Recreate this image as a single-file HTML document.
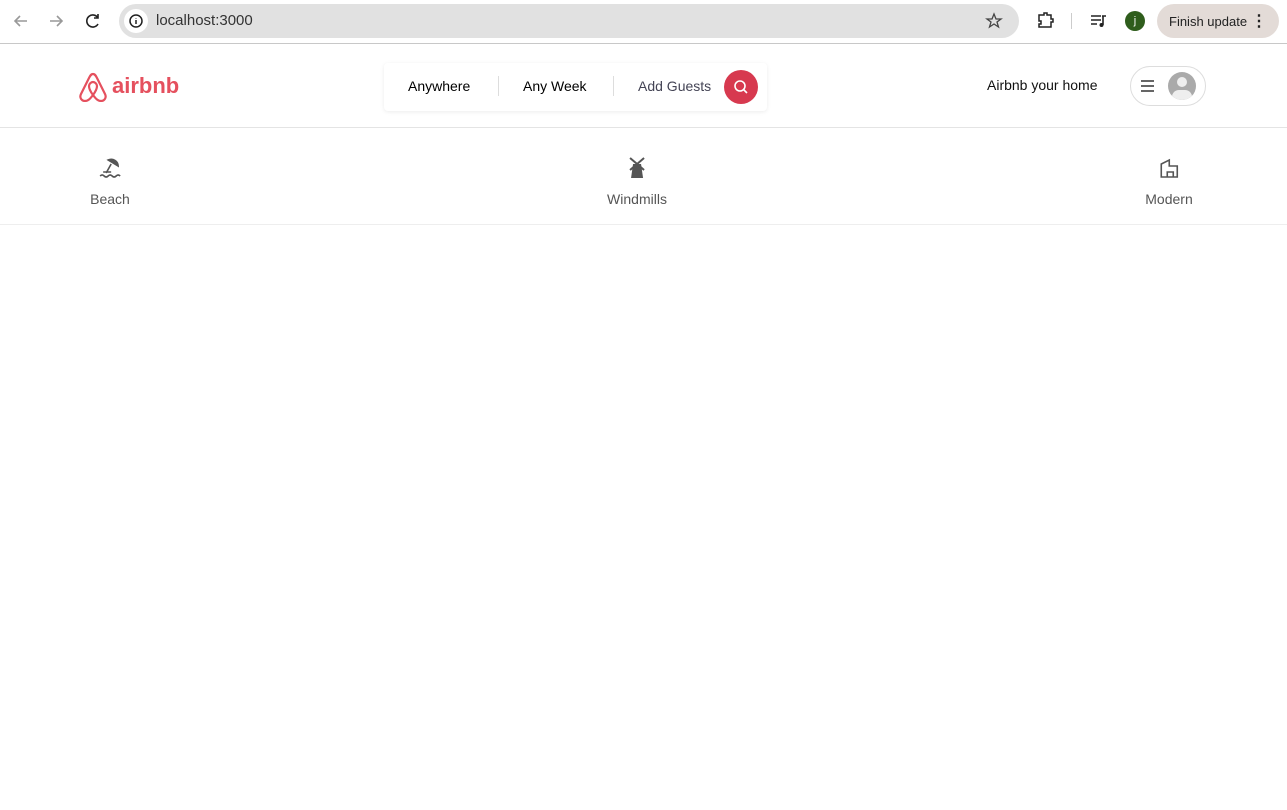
<!DOCTYPE html>
<html><head><style>
*{margin:0;padding:0;box-sizing:border-box}
body{width:1287px;height:810px;background:#fff;font-family:"Liberation Sans",sans-serif;position:relative;overflow:hidden}
.chrome{position:absolute;left:0;top:0;width:1287px;height:44px;background:#fff;border-bottom:1px solid #c8c8c8}
.url{position:absolute;left:119px;top:4px;width:900px;height:34px;border-radius:17px;background:#e1e1e1}
.url .i{position:absolute;left:5px;top:5px;width:24px;height:24px;border-radius:12px;background:#fff}
.url span{position:absolute;left:37px;top:8px;font-size:15px;color:#333}
.fin{position:absolute;left:1157px;top:4px;width:122px;height:34px;border-radius:17px;background:#e3dbd7;font-size:13px;color:#222;padding:10px 0 0 12px}
.avatar{position:absolute;left:1125px;top:11px;width:20px;height:20px;border-radius:10px;background:#2f5d1c;color:#fff;font-size:11px;text-align:center;line-height:20px}
.hdr{position:absolute;top:45px;left:0;width:1287px;height:83px;border-bottom:1px solid #e4e4e4}
.logo{position:absolute;left:78px;top:25px;color:#e5505e;font-size:22px;font-weight:bold;display:flex;align-items:center;gap:4px}
.search{position:absolute;left:384px;top:18px;width:383px;height:48px;box-shadow:0 1px 4px rgba(0,0,0,.08);border-radius:4px;font-size:14px}
.search span{position:absolute;top:15px}
.sep{position:absolute;top:13px;width:1px;height:20px;background:#ddd}
.sbtn{position:absolute;left:340px;top:7px;width:34px;height:34px;border-radius:17px;background:#d7394f}
.host{position:absolute;left:987px;top:32px;font-size:14px;color:#111}
.menu{position:absolute;left:1130px;top:21px;width:76px;height:40px;border:1px solid #ddd;border-radius:20px}
.cat{position:absolute;top:128px;height:97px;border-bottom:1px solid #eee;width:1287px}
.c{position:absolute;top:28px;text-align:center;font-size:14px;color:#555;transform:translateX(-50%)}
.c svg{display:block;margin:0 auto 11px}
</style></head><body>
<div class="chrome">
<svg style="position:absolute;left:12px;top:12px" width="90" height="18" fill="none" stroke-width="1.6"><path d="M15 9H3M8 4L3 9l5 5" stroke="#999"/><path d="M38 9h12M45 4l5 5-5 5" stroke="#999"/><path d="M86 6a6 6 0 1 0 0 6M86 2v4h-4" stroke="#222"/></svg>
<div class="url"><div class="i"><svg width="24" height="24"><circle cx="12" cy="12" r="6" fill="none" stroke="#222" stroke-width="1.5"/><path d="M12 11v4M12 9v.5" stroke="#222" stroke-width="1.5"/></svg></div><span>localhost:3000</span>
<svg style="position:absolute;left:866px;top:8px" width="18" height="18"><path d="M9 2l2 5h5l-4 3 1.5 5L9 12l-4.5 3L6 10 2 7h5z" fill="none" stroke="#444" stroke-width="1.3"/></svg></div>
<svg style="position:absolute;left:1036px;top:11px" width="20" height="20"><path d="M3 4h5v-2h3v2h4v4h2v3h-2v5H3v-3h2v-3H3z" fill="none" stroke="#222" stroke-width="1.5"/></svg>
<div style="position:absolute;left:1071px;top:13px;width:1px;height:16px;background:#ccc"></div>
<svg style="position:absolute;left:1090px;top:12px" width="18" height="18"><path d="M1 4h10M1 8h10M1 12h6M12 4h4M13 4v9" stroke="#222" stroke-width="1.6"/><circle cx="11.5" cy="13" r="2" fill="#222"/></svg>
<div class="avatar">j</div>
<div class="fin">Finish update <b style="position:absolute;right:12px;top:7px;font-size:16px">⋮</b></div>
</div>
<div class="hdr">
<div class="logo"><svg width="30" height="32" viewBox="0 0 30 32" fill="none" stroke="#e5505e" stroke-width="2.2"><path d="M15 4c-2 0-3 2-4 4L3 24c-2 4 1 7 4 7 3 0 5-2 8-6 3 4 5 6 8 6 3 0 6-3 4-7L19 8c-1-2-2-4-4-4z"/><path d="M15 25c-3-4-4-7-4-9 0-2 2-4 4-4s4 2 4 4c0 2-1 5-4 9z"/></svg>airbnb</div>
<div class="search"><span style="left:24px">Anywhere</span><div class="sep" style="left:114px"></div><span style="left:139px">Any Week</span><div class="sep" style="left:229px"></div><span style="left:254px;color:#445">Add Guests</span>
<div class="sbtn"><svg width="34" height="34"><circle cx="16" cy="16" r="5" fill="none" stroke="#fff" stroke-width="1.6"/><path d="M20 20l3 3" stroke="#fff" stroke-width="1.6"/></svg></div></div>
<div class="host">Airbnb your home</div>
<div class="menu"><svg style="position:absolute;left:10px;top:13px" width="14" height="12"><path d="M0 1h13M0 6h13M0 11h13" stroke="#333" stroke-width="1.5"/></svg><div style="position:absolute;left:37px;top:5px;width:28px;height:28px;border-radius:14px;background:#aaa;overflow:hidden"><div style="position:absolute;left:9px;top:5px;width:10px;height:10px;border-radius:5px;background:#eee"></div><div style="position:absolute;left:4px;top:18px;width:20px;height:14px;border-radius:10px;background:#eee"></div></div></div>
</div>
<div class="cat">
<div class="c" style="left:110px"><svg width="24" height="24" fill="none" stroke="#555" stroke-width="1.6"><path d="M10 4a7 7 0 0 1 10 6L10 4z" fill="#555"/><path d="M13 8l-5 9M5 16h8M2 20q2-2 4 0t4 0 4 0 4 0 4 0"/></svg>Beach</div>
<div class="c" style="left:637px"><svg width="24" height="24" fill="#555"><path d="M8 8h8l2 14H6z"/><path d="M5 2l14 12M19 2L5 14" stroke="#555" stroke-width="2"/></svg>Windmills</div>
<div class="c" style="left:1169px"><svg width="24" height="24" fill="none" stroke="#555" stroke-width="1.6"><path d="M4 21V8l8-4v6h8v11zM10 21v-5h6v5"/></svg>Modern</div>
</div>
</body></html>
